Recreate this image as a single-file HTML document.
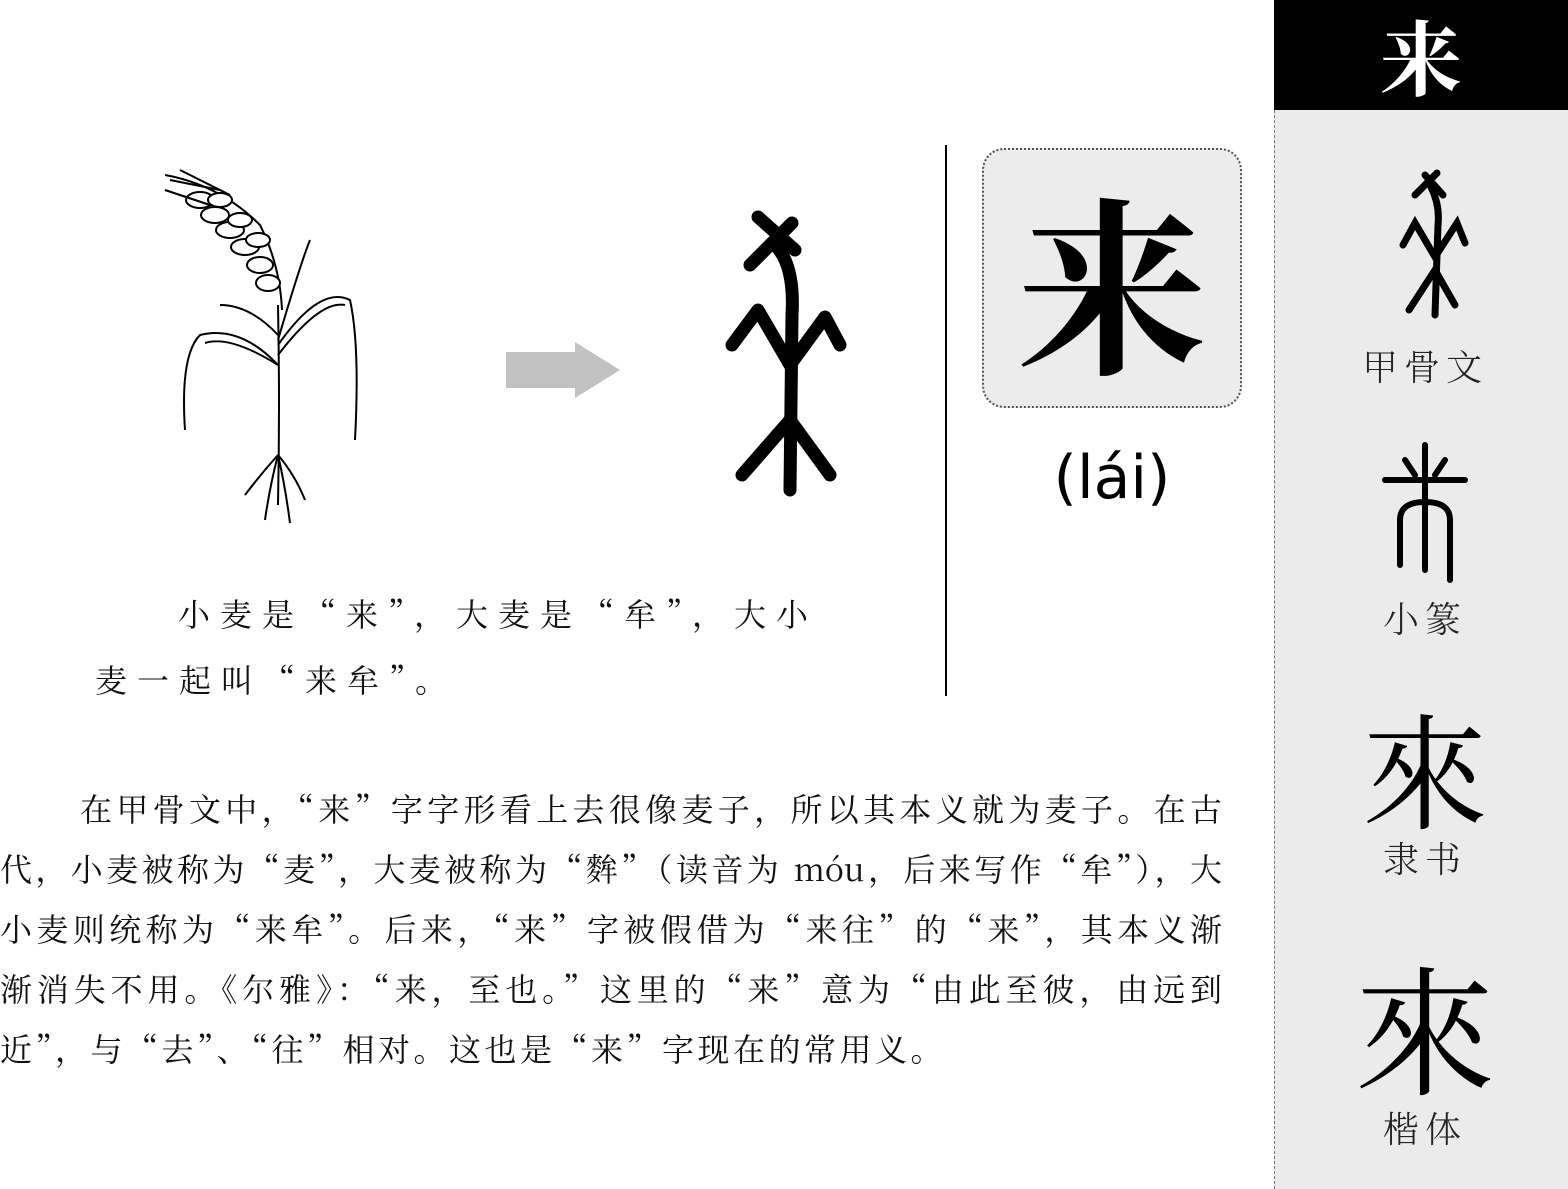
<!DOCTYPE html>
<html><head><meta charset="utf-8"><style>
body{margin:0;width:1568px;height:1189px;background:#fff;position:relative;overflow:hidden;font-family:"Noto Serif CJK SC",serif;}
.abs{position:absolute;}
.side{left:1274px;top:0;width:294px;height:1189px;background:#ebebeb;border-left:1px dashed #777;box-sizing:border-box;}
.top{left:1274px;top:0;width:294px;height:110px;background:#000;color:#fff;font-size:82px;font-weight:bold;text-align:center;line-height:110px;}
.lab{width:294px;left:1278px;text-align:center;font-size:36px;color:#222;letter-spacing:6px;font-family:"Noto Serif CJK SC",serif;font-weight:300}
.body{left:0;width:1222px;font-size:32px;line-height:60px;color:#111;font-family:"Noto Serif CJK SC",serif}
.body div{text-align:justify;text-align-last:justify;white-space:nowrap;height:60px}
.cap{font-size:32px;color:#111;letter-spacing:10px;font-family:"Noto Serif CJK SC",serif}
</style></head><body>
<div class="abs side"></div>
<div class="abs top">来</div>
<svg class="abs" style="left:1395px;top:165px" width="80" height="155" viewBox="0 0 80 155">
<g stroke="#000" stroke-width="7" fill="none" stroke-linecap="round">
<path d="M30 10 L48 30 M42 8 L20 30 M36 22 Q45 40 43 60 L40 150"/>
<path d="M8 80 L20 58 L40 92 L62 58 L70 78"/>
<path d="M14 145 L40 105 L60 140"/>
</g></svg>
<div class="abs lab" style="top:340px">甲骨文</div>
<svg class="abs" style="left:1380px;top:440px" width="90" height="145" viewBox="0 0 90 145">
<g stroke="#000" stroke-width="6" fill="none" stroke-linecap="round">
<path d="M45 5 L45 130 M5 40 L85 40 M25 20 L35 35 M65 20 L55 35"/>
<path d="M20 125 L20 80 Q20 62 45 62 Q70 62 70 80 L70 140"/>
</g></svg>
<div class="abs lab" style="top:592px">小篆</div>
<div class="abs" style="left:1278px;width:294px;text-align:center;top:695px;font-size:125px;line-height:140px;font-family:'Noto Serif CJK TC',serif">來</div>
<div class="abs lab" style="top:832px">隶书</div>
<div class="abs" style="left:1278px;width:294px;text-align:center;top:950px;font-size:140px;line-height:150px;font-family:'Noto Serif CJK TC',serif">來</div>
<div class="abs lab" style="top:1102px">楷体</div>

<svg class="abs" style="left:160px;top:165px" width="210" height="365" viewBox="0 0 210 365">
<g stroke="#000" stroke-width="2" fill="none">
<path d="M118 140 Q120 240 118 340"/>
<path d="M5 10 Q60 20 100 60 Q120 100 122 145"/>
<g fill="#fff"><ellipse cx="40" cy="35" rx="14" ry="8"/><ellipse cx="55" cy="50" rx="14" ry="8"/><ellipse cx="70" cy="65" rx="14" ry="8"/><ellipse cx="85" cy="82" rx="14" ry="8"/><ellipse cx="100" cy="100" rx="13" ry="8"/><ellipse cx="108" cy="118" rx="12" ry="8"/><ellipse cx="60" cy="35" rx="12" ry="7"/><ellipse cx="80" cy="55" rx="12" ry="7"/><ellipse cx="98" cy="75" rx="12" ry="7"/></g>
<path d="M10 15 L60 25 M5 25 L50 40 M20 5 L70 30"/>
<path d="M118 200 Q80 160 40 170 Q20 190 25 265 M118 200 Q70 170 45 178"/>
<path d="M118 180 Q160 120 190 135 Q200 180 195 275 M118 190 Q160 135 185 140"/>
<path d="M118 170 Q90 140 60 140 M118 175 Q140 100 150 75"/>
<path d="M118 290 Q100 310 85 330 M118 290 Q110 320 105 355 M118 290 Q125 320 130 358 M118 290 Q135 310 145 335"/>
</g></svg>
<svg class="abs" style="left:506px;top:342px" width="115" height="56"><path d="M0 10 H69 V0 L114 28 L69 56 V46 H0 Z" fill="#c2c2c2"/></svg>
<svg class="abs" style="left:720px;top:205px" width="135" height="295" viewBox="0 0 135 295">
<g stroke="#000" stroke-width="13" fill="none" stroke-linecap="round" stroke-linejoin="round">
<path d="M38 12 L75 45 M72 18 L30 60 M55 40 Q75 60 72 110 L70 285"/>
<path d="M12 140 L38 105 L70 160 L105 112 L120 140"/>
<path d="M22 270 L70 215 L110 270"/>
</g></svg>

<div class="abs cap" style="left:178px;top:590px">小麦是“来”，大麦是“牟”，大小</div>
<div class="abs cap" style="left:95px;top:656px">麦一起叫“来牟”。</div>

<div class="abs" style="left:945px;top:145px;width:2px;height:551px;background:#000"></div>
<div class="abs" style="left:982px;top:148px;width:260px;height:260px;background:#ececec;border:2px dotted #555;border-radius:22px;box-sizing:border-box;text-align:center;font-size:190px;line-height:256px;font-weight:bold;font-family:'Noto Serif CJK SC',serif">来</div>
<div class="abs" style="left:1012px;width:200px;top:440px;text-align:center;font-family:'DejaVu Sans',sans-serif;font-size:60px;line-height:76px">(lái)</div>

<div class="abs body" style="top:778px">
<div style="padding-left:80px">在甲骨文中，“来”字字形看上去很像麦子，所以其本义就为麦子。在古</div>
<div>代，小麦被称为“麦”，大麦被称为“麰”（读音为 móu，后来写作“牟”），大</div>
<div>小麦则统称为“来牟”。后来，“来”字被假借为“来往”的“来”，其本义渐</div>
<div>渐消失不用。《尔雅》：“来，至也。”这里的“来”意为“由此至彼，由远到</div>
<div style="text-align-last:left;letter-spacing:3.5px">近”，与“去”、“往”相对。这也是“来”字现在的常用义。</div>
</div>
</body></html>
